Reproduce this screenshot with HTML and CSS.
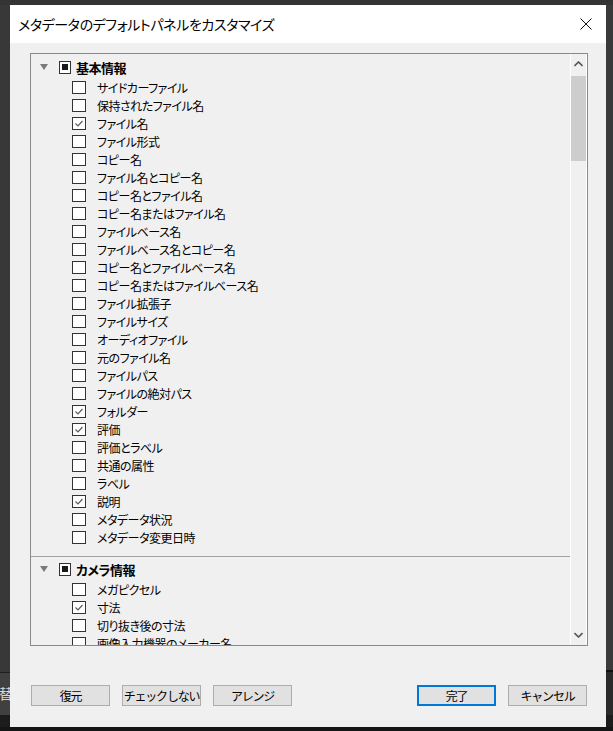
FILE: index.html
```html
<!DOCTYPE html>
<html lang="ja">

<head>
    <meta charset="UTF-8">
    <meta name="viewport" content="width=device-width, initial-scale=1.0">
    <title>メタデータのデフォルトパネルをカスタマイズ</title>
    <link rel="stylesheet" href="styles.css">
</head>

<body>
    <div class="screen">
        <div class="desk-top"></div>
        <div class="desk-row">
            <div class="desk-side left">
                <div class="side-fill"></div>
                <div class="side-tab"><span>替</span></div>
                <div class="side-foot"></div>
            </div>

            <div class="dialog">
                <div class="titlebar">
                    <span class="title">メタデータのデフォルトパネルをカスタマイズ</span>
                    <button class="close" aria-label="閉じる">
                        <svg width="12" height="12" viewBox="0 0 12 12">
                            <path d="M0.5 0.5 L11.5 11.5 M11.5 0.5 L0.5 11.5" stroke="#111" stroke-width="1" fill="none" />
                        </svg>
                    </button>
                </div>

                <div class="dialog-body">
                    <div class="listbox">
                        <div class="list">
                            <!-- 基本情報 -->
                            <div class="group">
                                <div class="group-head">
                                    <span class="twisty"></span>
                                    <span class="box-mixed"></span>
                                    <span class="group-name">基本情報</span>
                                </div>
                                <ul class="items">
                                    <li><span class="box"></span>サイドカーファイル</li>
                                    <li><span class="box"></span>保持されたファイル名</li>
                                    <li><span class="box on"></span>ファイル名</li>
                                    <li><span class="box"></span>ファイル形式</li>
                                    <li><span class="box"></span>コピー名</li>
                                    <li><span class="box"></span>ファイル名とコピー名</li>
                                    <li><span class="box"></span>コピー名とファイル名</li>
                                    <li><span class="box"></span>コピー名またはファイル名</li>
                                    <li><span class="box"></span>ファイルベース名</li>
                                    <li><span class="box"></span>ファイルベース名とコピー名</li>
                                    <li><span class="box"></span>コピー名とファイルベース名</li>
                                    <li><span class="box"></span>コピー名またはファイルベース名</li>
                                    <li><span class="box"></span>ファイル拡張子</li>
                                    <li><span class="box"></span>ファイルサイズ</li>
                                    <li><span class="box"></span>オーディオファイル</li>
                                    <li><span class="box"></span>元のファイル名</li>
                                    <li><span class="box"></span>ファイルパス</li>
                                    <li><span class="box"></span>ファイルの絶対パス</li>
                                    <li><span class="box on"></span>フォルダー</li>
                                    <li><span class="box on"></span>評価</li>
                                    <li><span class="box"></span>評価とラベル</li>
                                    <li><span class="box"></span>共通の属性</li>
                                    <li><span class="box"></span>ラベル</li>
                                    <li><span class="box on"></span>説明</li>
                                    <li><span class="box"></span>メタデータ状況</li>
                                    <li><span class="box"></span>メタデータ変更日時</li>
                                </ul>
                            </div>

                            <!-- カメラ情報 -->
                            <div class="group">
                                <div class="group-head">
                                    <span class="twisty"></span>
                                    <span class="box-mixed"></span>
                                    <span class="group-name">カメラ情報</span>
                                </div>
                                <ul class="items">
                                    <li><span class="box"></span>メガピクセル</li>
                                    <li><span class="box on"></span>寸法</li>
                                    <li><span class="box"></span>切り抜き後の寸法</li>
                                    <li><span class="box"></span>画像入力機器のメーカー名</li>
                                </ul>
                            </div>
                        </div>

                        <div class="scrollbar">
                            <div class="arrow up">
                                <svg width="9" height="6" viewBox="0 0 9 6">
                                    <path d="M0.5 5 L4.5 1 L8.5 5" stroke="#555" stroke-width="1.6" fill="none" />
                                </svg>
                            </div>
                            <div class="track">
                                <div class="thumb"></div>
                            </div>
                            <div class="arrow down">
                                <svg width="9" height="6" viewBox="0 0 9 6">
                                    <path d="M0.5 1 L4.5 5 L8.5 1" stroke="#555" stroke-width="1.6" fill="none" />
                                </svg>
                            </div>
                        </div>
                    </div>

                    <div class="buttons">
                        <button class="btn">復元</button>
                        <button class="btn">チェックしない</button>
                        <button class="btn">アレンジ</button>
                        <div class="spacer"></div>
                        <button class="btn primary">完了</button>
                        <button class="btn">キャンセル</button>
                    </div>
                </div>
            </div>

            <div class="desk-side right">
                <div class="side-fill"></div>
                <div class="side-line"></div>
                <div class="side-tab"></div>
                <div class="side-foot"></div>
            </div>
        </div>
        <div class="desk-bottom"></div>
    </div>

    <script>
        // put a check mark in every ticked box
        const checkSvg = '<svg width="12" height="11" viewBox="0 0 12 11"><path d="M2.5 5.5 L5 8 L9.5 3" stroke="#5a5a5a" stroke-width="1.2" fill="none"/></svg>';
        document.querySelectorAll('.box.on').forEach(box => {
            box.innerHTML = checkSvg;
        });
    </script>
</body>

</html>
```

FILE: styles.css
```css
* {
    box-sizing: border-box;
}

body {
    margin: 0;
    background-color: #323232;
    font-family: "Noto Sans CJK JP", "Noto Sans", sans-serif;
    font-feature-settings: "palt";
    font-size: 12px;
    color: #000;
    overflow: hidden;
}

.screen {
    width: 613px;
    height: 731px;
    display: flex;
    flex-direction: column;
}

.desk-top {
    height: 5px;
    background-color: #343434;
}

.desk-row {
    display: flex;
    height: 722px;
}

.desk-bottom {
    flex: 1;
    background-color: #151515;
}

/* strips of the desktop around the dialog */
.desk-side {
    display: flex;
    flex-direction: column;
    overflow: hidden;
}

.desk-side.left {
    width: 10px;
}

.desk-side.right {
    width: 7px;
}

.side-fill {
    flex: 1;
    background-color: #383838;
}

.side-tab {
    height: 43px;
    background-color: #404040;
    border-top: 1px solid #1e1e1e;
    display: flex;
    align-items: center;
    justify-content: flex-end;
}

.side-tab span {
    color: #d8d8d8;
    font-size: 14px;
    margin-right: -3px;
    margin-top: -2px;
}

.right .side-fill {
    background-color: #3a3a3a;
}

.right .side-line {
    height: 2px;
    background-color: #111;
}

.right .side-tab {
    height: 43px;
    border-top: none;
    background-color: #2a2a2a;
}

.side-foot {
    height: 12px;
    background-color: #1c1c1c;
}

/* dialog */
.dialog {
    width: 596px;
    display: flex;
    flex-direction: column;
    background-color: #f0f0f0;
}

.titlebar {
    height: 38px;
    background-color: #fff;
    display: flex;
    align-items: center;
    padding-left: 8px;
}

.title {
    font-size: 14px;
    flex: 1;
    letter-spacing: -0.4px;
}

.close {
    width: 40px;
    height: 38px;
    border: none;
    background: none;
    padding: 0;
    display: flex;
    align-items: center;
    justify-content: center;
}

.dialog-body {
    flex: 1;
    padding: 10px 18px 0 20px;
}

.listbox {
    height: 593px;
    border: 1px solid #8a8a8a;
    display: flex;
    background-color: #f0f0f0;
}

.list {
    flex: 1;
    overflow: hidden;
}

.group {
    padding-top: 2px;
    padding-bottom: 10px;
}

.group + .group {
    border-top: 1px solid #a0a0a0;
    padding-top: 1px;
}

.group-head {
    height: 22px;
    display: flex;
    align-items: center;
    padding-left: 9px;
}

.twisty {
    width: 0;
    height: 0;
    border-left: 4px solid transparent;
    border-right: 4px solid transparent;
    border-top: 6px solid #7a7a7a;
    margin-right: 11px;
}

.box-mixed {
    width: 12px;
    height: 13px;
    border: 1px solid #333;
    background-color: #fff;
    display: flex;
    align-items: center;
    justify-content: center;
    margin-right: 5px;
}

.box-mixed::after {
    content: "";
    width: 6px;
    height: 6px;
    background-color: #1a1a1a;
}

.group-name {
    font-weight: bold;
    font-size: 13px;
    letter-spacing: -0.5px;
}

.items {
    list-style: none;
    margin: 0;
    padding: 0;
}

.items li {
    height: 18px;
    display: flex;
    align-items: center;
    padding-left: 41px;
    white-space: nowrap;
    letter-spacing: -0.5px;
}

.box {
    width: 14px;
    height: 13px;
    border: 1px solid #333;
    background-color: #fff;
    margin-right: 11px;
    flex-shrink: 0;
    display: flex;
    align-items: center;
    justify-content: center;
}

/* scrollbar */
.scrollbar {
    width: 17px;
    display: flex;
    flex-direction: column;
    border-left: 1px solid #fff;
    border-right: 1px solid #fff;
    background-color: #f0f0f0;
}

.arrow {
    height: 20px;
    display: flex;
    align-items: center;
    justify-content: center;
}

.track {
    flex: 1;
    padding-top: 2px;
}

.thumb {
    height: 85px;
    background-color: #cdcdcd;
}

/* buttons */
.buttons {
    display: flex;
    gap: 12px;
    margin-top: 39px;
    padding-left: 1px;
    padding-right: 1px;
}

.spacer {
    flex: 1;
}

.btn {
    width: 79px;
    height: 21px;
    padding: 0;
    background-color: #e1e1e1;
    border: 1px solid #adadad;
    font-family: inherit;
    font-size: 12px;
    letter-spacing: -1.2px;
    white-space: nowrap;
    color: #000;
}

.btn.primary {
    border: 2px solid #0078d7;
}
```
